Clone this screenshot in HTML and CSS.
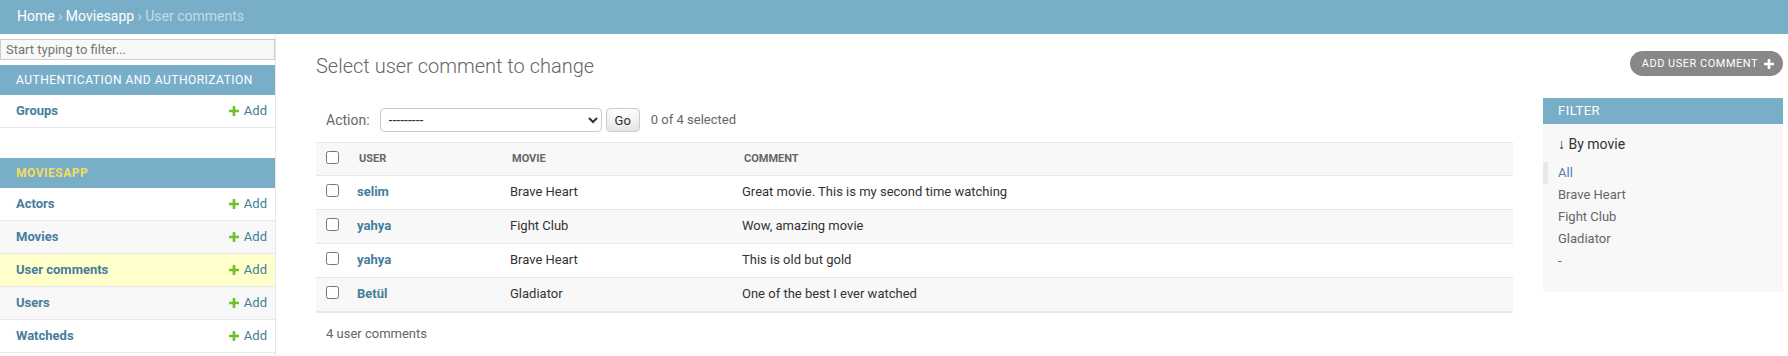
FILE: index.html
```html
<!DOCTYPE html>
<html lang="en">
  <head>
    <meta charset="UTF-8" />
    <title>Select user comment to change</title>
    <link rel="stylesheet" href="styles.css">
  </head>
  <body>
    <div class="breadcrumbs">
      <a href="#">Home</a> › <a href="#">Moviesapp</a> › User comments
    </div>

    <div class="main">
      <nav class="nav-sidebar">
        <input type="search" class="nav-filter" placeholder="Start typing to filter..." />

        <table class="app-table">
          <caption><a href="#" class="section">Authentication and Authorization</a></caption>
          <tr>
            <th><a href="#">Groups</a></th>
            <td><a href="#" class="addlink"><svg class="add-icon" viewBox="192 188 1408 1408"><path d="M1600 796v192q0 40-28 68t-68 28h-416v416q0 40-28 68t-68 28h-192q-40 0-68-28t-28-68v-416h-416q-40 0-68-28t-28-68v-192q0-40 28-68t68-28h416v-416q0-40 28-68t68-28h192q40 0 68 28t28 68v416h416q40 0 68 28t28 68z"/></svg>Add</a></td>
          </tr>
        </table>

        <table class="app-table current-app">
          <caption><a href="#" class="section">Moviesapp</a></caption>
          <tr>
            <th><a href="#">Actors</a></th>
            <td><a href="#" class="addlink"><svg class="add-icon" viewBox="192 188 1408 1408"><path d="M1600 796v192q0 40-28 68t-68 28h-416v416q0 40-28 68t-68 28h-192q-40 0-68-28t-28-68v-416h-416q-40 0-68-28t-28-68v-192q0-40 28-68t68-28h416v-416q0-40 28-68t68-28h192q40 0 68 28t28 68v416h416q40 0 68 28t28 68z"/></svg>Add</a></td>
          </tr>
          <tr>
            <th><a href="#">Movies</a></th>
            <td><a href="#" class="addlink"><svg class="add-icon" viewBox="192 188 1408 1408"><path d="M1600 796v192q0 40-28 68t-68 28h-416v416q0 40-28 68t-68 28h-192q-40 0-68-28t-28-68v-416h-416q-40 0-68-28t-28-68v-192q0-40 28-68t68-28h416v-416q0-40 28-68t68-28h192q40 0 68 28t28 68v416h416q40 0 68 28t28 68z"/></svg>Add</a></td>
          </tr>
          <tr class="current-model">
            <th><a href="#">User comments</a></th>
            <td><a href="#" class="addlink"><svg class="add-icon" viewBox="192 188 1408 1408"><path d="M1600 796v192q0 40-28 68t-68 28h-416v416q0 40-28 68t-68 28h-192q-40 0-68-28t-28-68v-416h-416q-40 0-68-28t-28-68v-192q0-40 28-68t68-28h416v-416q0-40 28-68t68-28h192q40 0 68 28t28 68v416h416q40 0 68 28t28 68z"/></svg>Add</a></td>
          </tr>
          <tr>
            <th><a href="#">Users</a></th>
            <td><a href="#" class="addlink"><svg class="add-icon" viewBox="192 188 1408 1408"><path d="M1600 796v192q0 40-28 68t-68 28h-416v416q0 40-28 68t-68 28h-192q-40 0-68-28t-28-68v-416h-416q-40 0-68-28t-28-68v-192q0-40 28-68t68-28h416v-416q0-40 28-68t68-28h192q40 0 68 28t28 68v416h416q40 0 68 28t28 68z"/></svg>Add</a></td>
          </tr>
          <tr>
            <th><a href="#">Watcheds</a></th>
            <td><a href="#" class="addlink"><svg class="add-icon" viewBox="192 188 1408 1408"><path d="M1600 796v192q0 40-28 68t-68 28h-416v416q0 40-28 68t-68 28h-192q-40 0-68-28t-28-68v-416h-416q-40 0-68-28t-28-68v-192q0-40 28-68t68-28h416v-416q0-40 28-68t68-28h192q40 0 68 28t28 68v416h416q40 0 68 28t28 68z"/></svg>Add</a></td>
          </tr>
        </table>
      </nav>

      <div class="content">
        <div class="content-head">
          <h1>Select user comment to change</h1>
          <a href="#" class="object-tool">Add user comment
            <svg class="tool-icon" viewBox="192 128 1408 1408"><path d="M1600 736v192q0 40-28 68t-68 28h-416v416q0 40-28 68t-68 28h-192q-40 0-68-28t-28-68v-416h-416q-40 0-68-28t-28-68v-192q0-40 28-68t68-28h416v-416q0-40 28-68t68-28h192q40 0 68 28t28 68v416h416q40 0 68 28t28 68z"/></svg>
          </a>
        </div>

        <div class="changelist">
          <div class="changelist-form">
            <div class="actions">
              <label for="action">Action:</label>
              <select id="action" class="action-select">
                <option>---------</option>
                <option>Delete selected user comments</option>
              </select>
              <button class="go-btn">Go</button>
              <span class="action-counter">0 of 4 selected</span>
            </div>

            <table class="result-list">
              <thead>
                <tr>
                  <th class="col-check"><span><input type="checkbox" /></span></th>
                  <th class="col-user"><span>User</span></th>
                  <th class="col-movie"><span>Movie</span></th>
                  <th><span>Comment</span></th>
                </tr>
              </thead>
              <tbody>
                <tr>
                  <td class="cell-check"><input type="checkbox" /></td>
                  <td class="cell-user"><a href="#">selim</a></td>
                  <td>Brave Heart</td>
                  <td>Great movie. This is my second time watching</td>
                </tr>
                <tr>
                  <td class="cell-check"><input type="checkbox" /></td>
                  <td class="cell-user"><a href="#">yahya</a></td>
                  <td>Fight Club</td>
                  <td>Wow, amazing movie</td>
                </tr>
                <tr>
                  <td class="cell-check"><input type="checkbox" /></td>
                  <td class="cell-user"><a href="#">yahya</a></td>
                  <td>Brave Heart</td>
                  <td>This is old but gold</td>
                </tr>
                <tr>
                  <td class="cell-check"><input type="checkbox" /></td>
                  <td class="cell-user"><a href="#">Betül</a></td>
                  <td>Gladiator</td>
                  <td>One of the best I ever watched</td>
                </tr>
              </tbody>
            </table>

            <p class="paginator">4 user comments</p>
          </div>

          <div class="changelist-filter">
            <h2 class="filter-title">Filter</h2>
            <h3 class="filter-heading"><span class="filter-arrow">↓</span> By movie</h3>
            <ul class="filter-list">
              <li class="selected"><a href="#">All</a></li>
              <li><a href="#">Brave Heart</a></li>
              <li><a href="#">Fight Club</a></li>
              <li><a href="#">Gladiator</a></li>
              <li><a href="#">-</a></li>
            </ul>
          </div>
        </div>
      </div>
    </div>
  </body>
</html>
```

FILE: styles.css
```css
body {
  margin: 0;
  font-family: Roboto, "Liberation Sans", sans-serif;
  font-size: 14px;
  color: #333;
  background: #fff;
}

a {
  color: #447e9b;
  text-decoration: none;
}

.breadcrumbs {
  background: #79aec8;
  color: #c4dce8;
  padding: 8px 17px 10px;
  font-size: 14px;
  line-height: 16px;
}

.breadcrumbs a {
  color: #fff;
}

.main {
  display: flex;
}

/* sidebar */
.nav-sidebar {
  flex: 0 0 275px;
  width: 275px;
  min-width: 0;
  overflow: hidden;
  border-right: 1px solid #e8e8e8;
  min-height: 322px;
}

.nav-filter {
  display: block;
  width: 100%;
  box-sizing: border-box;
  margin: 5px 0;
  padding: 2px 5px;
  border: 1px solid #ccc;
  border-radius: 0;
  background: #f8f8f8;
  color: #333;
  font-family: Roboto, "Liberation Sans", sans-serif;
  font-size: 13px;
  outline: none;
}

.app-table {
  width: 100%;
  border-collapse: collapse;
  margin-bottom: 30px;
}

.app-table caption {
  caption-side: top;
  text-align: left;
  white-space: nowrap;
  padding: 8px 8px 8px 16px;
  background: #79aec8;
  font-size: 12px;
  line-height: 14px;
  letter-spacing: 0.5px;
  text-transform: uppercase;
}

.app-table caption .section {
  color: #fff;
}

.current-app caption .section {
  color: #f5dd5d;
  font-weight: bold;
}

.app-table th,
.app-table td {
  padding: 8px;
  font-size: 13px;
  line-height: 16px;
  border-bottom: 1px solid #e8e8e8;
  vertical-align: top;
}

.app-table th {
  width: 100%;
  padding-left: 16px;
  text-align: left;
}

.app-table td {
  white-space: nowrap;
  text-align: right;
}

.app-table tr:nth-child(even) {
  background: #f8f8f8;
}

.app-table tr.current-model {
  background: #ffc;
}

.add-icon {
  width: 10px;
  height: 10px;
  margin-right: 5px;
  vertical-align: -1px;
  fill: #70bf2b;
}

/* content */
.content {
  flex: 1;
  min-width: 0;
  padding: 20px 5px 20px 40px;
}

.content-head {
  display: flex;
  justify-content: space-between;
  align-items: flex-start;
  margin-bottom: 20px;
}

.content-head h1 {
  margin: 0;
  font-size: 20px;
  font-weight: 300;
  line-height: 24px;
  color: #666;
}

.object-tool {
  display: flex;
  align-items: center;
  margin-top: -3px;
  padding: 4px 9px 4px 12px;
  border-radius: 15px;
  background: #888;
  color: #fff;
  font-size: 11px;
  line-height: 17px;
  letter-spacing: 0.5px;
  text-transform: uppercase;
}

.tool-icon {
  width: 10px;
  height: 10px;
  margin-left: 6px;
  fill: #fff;
}

.changelist {
  display: flex;
  align-items: flex-start;
}

.changelist-form {
  flex: 1;
  min-width: 0;
}

.actions {
  display: flex;
  align-items: center;
  padding: 10px;
  line-height: 24px;
  color: #666;
  font-size: 14px;
}

.action-select {
  width: 222px;
  height: 24px;
  margin: 0 0 0 10px;
  padding: 0 0 0 4px;
  border: 1px solid #ccc;
  border-radius: 4px;
  background: #fff;
  color: #333;
  font-family: Roboto, "Liberation Sans", sans-serif;
  font-size: 14px;
}

.go-btn {
  height: 24px;
  margin-left: 4px;
  padding: 4px 8px;
  border: 1px solid #ccc;
  border-radius: 4px;
  background: #fff;
  box-shadow: 0 -15px 20px -10px rgba(0, 0, 0, 0.15) inset;
  color: #333;
  font-family: Roboto, "Liberation Sans", sans-serif;
  font-size: 13px;
  line-height: 1;
}

.action-counter {
  margin-left: 11px;
  font-size: 13px;
}

.result-list {
  width: 100%;
  border-collapse: collapse;
  table-layout: fixed;
}

.result-list thead th {
  padding: 0;
  background: #f8f8f8;
  border-top: 1px solid #e8e8e8;
  border-bottom: 1px solid #e8e8e8;
  color: #666;
  font-size: 11px;
  text-transform: uppercase;
  text-align: left;
  white-space: nowrap;
}

.result-list thead th span {
  display: block;
  height: 16px;
  padding: 8px 10px;
  line-height: 16px;
}

.result-list .col-check {
  width: 33px;
  text-align: center;
}

.result-list .col-user {
  width: 153px;
}

.result-list .col-movie {
  width: 232px;
}

.result-list input {
  margin: 0;
  vertical-align: baseline;
}

.result-list thead input {
  vertical-align: top;
}

.result-list td {
  padding: 8px;
  font-size: 13px;
  line-height: 16px;
  border-bottom: 1px solid #e8e8e8;
  vertical-align: top;
}

.result-list .cell-check {
  text-align: center;
}

.result-list .cell-user a {
  font-weight: bold;
}

.result-list tbody tr:nth-child(even) {
  background: #f8f8f8;
}

.paginator {
  margin: 0;
  padding: 10px;
  border-top: 1px solid #e8e8e8;
  color: #666;
  font-size: 13px;
  line-height: 22px;
}

/* filter */
.changelist-filter {
  flex: 0 0 240px;
  margin-left: 30px;
  background: #f8f8f8;
}

.filter-title {
  margin: 0 0 12px;
  padding: 5px 15px;
  background: #79aec8;
  color: #fff;
  font-size: 13px;
  font-weight: 400;
  line-height: 16px;
  letter-spacing: 0.5px;
  text-transform: uppercase;
}

.filter-heading {
  margin: 0 0 10px;
  padding: 0 15px;
  font-size: 14px;
  font-weight: 400;
  line-height: 16px;
  color: #333;
}

.filter-arrow {
  font-weight: bold;
  color: #036;
}

.filter-list {
  list-style: none;
  margin: 0 0 5px;
  padding: 0 15px 15px;
}

.filter-list li {
  padding: 1px 0;
  font-size: 13px;
  line-height: 20px;
}

.filter-list a {
  display: block;
  color: #666;
}

.filter-list li.selected {
  margin-left: -15px;
  padding-left: 10px;
  border-left: 5px solid #e8e8e8;
}

.filter-list li.selected a {
  color: #5b80b2;
}
```
